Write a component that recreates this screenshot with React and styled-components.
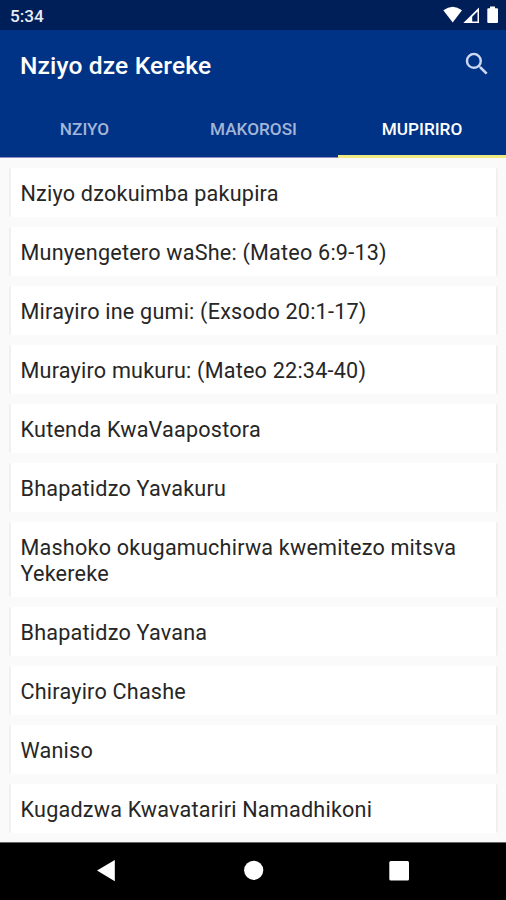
import React from 'react';
import styled, { createGlobalStyle } from 'styled-components';

const GlobalStyle = createGlobalStyle`
  * { box-sizing: border-box; }
  body { margin: 0; background: #fafafa; font-family: Roboto, sans-serif; }
`;

const Screen = styled.div`
  width: 506px;
  height: 900px;
  display: flex;
  flex-direction: column;
  overflow: hidden;
  background: #fafafa;
`;

const StatusBar = styled.div`
  flex: none;
  height: 30px;
  padding: 2px 7px 0 10px;
  display: flex;
  align-items: center;
  justify-content: space-between;
  background: #001f58;
  color: #e9edf5;
  font-size: 17.2px;
  font-weight: 500;
`;

const StatusIcons = styled.svg`
  display: block;
  width: 56px;
  height: 20px;
  margin-top: -2px;
`;

const Header = styled.header`
  flex: none;
  height: 128px;
  display: flex;
  flex-direction: column;
  background: #003385;
`;

const Toolbar = styled.div`
  height: 70px;
  padding: 0 16px 0 20px;
  display: flex;
  align-items: center;
  justify-content: space-between;
`;

const Title = styled.h1`
  margin: 2px 0 0;
  color: #fff;
  font-size: 24.6px;
  font-weight: 500;
  line-height: 30px;
  letter-spacing: 0.13px;
`;

const SearchIcon = styled.svg`
  display: block;
  width: 30px;
  height: 30px;
  margin: -2px -2px 0 0;
  fill: #ccd8f2;
`;

const Tabs = styled.nav`
  height: 58px;
  display: grid;
  grid-template-columns: 169px 169px 168px;
`;

const Tab = styled.div`
  height: 58px;
  padding-top: ${(p) => (p.$active ? '3px' : '1px')};
  display: flex;
  align-items: center;
  justify-content: center;
  color: ${(p) => (p.$active ? '#fff' : '#a3b5d8')};
  border-bottom: ${(p) => (p.$active ? '3px solid #eeea84' : '1px solid #8e8ec4')};
  font-size: 17.2px;
  font-weight: 500;
`;

const List = styled.main`
  flex: 1;
  min-height: 0;
  padding: 10px 8px 0 9px;
  display: flex;
  flex-direction: column;
  gap: 10px;
  overflow: hidden;
`;

const Card = styled.div`
  flex: none;
  padding: 13px 9px 10px 9.5px;
  background: #fff;
  border: solid #f0f0f0;
  border-width: 0 2px;
  border-radius: 2px;
  color: #262626;
  font-size: 21.6px;
  line-height: 26px;
  letter-spacing: 0.21px;
`;

const NavBar = styled.footer`
  flex: none;
  height: 58px;
  display: grid;
  grid-template-columns: 180px 147px 1fr;
  background: #000;
  border-top: 1px solid #666;
`;

const NavIcon = styled.svg`
  display: block;
  width: 24px;
  height: 24px;
  margin: 15px 0 0 ${(p) => p.$offset}px;
  fill: #fff;
`;

const tabs = ['NZIYO', 'MAKOROSI', 'MUPIRIRO'];

const entries = [
  'Nziyo dzokuimba pakupira',
  'Munyengetero waShe: (Mateo 6:9-13)',
  'Mirayiro ine gumi: (Exsodo 20:1-17)',
  'Murayiro mukuru: (Mateo 22:34-40)',
  'Kutenda KwaVaapostora',
  'Bhapatidzo Yavakuru',
  'Mashoko okugamuchirwa kwemitezo mitsva Yekereke',
  'Bhapatidzo Yavana',
  'Chirayiro Chashe',
  'Waniso',
  'Kugadzwa Kwavatariri Namadhikoni',
];

export default function App() {
  return (
    <Screen>
      <GlobalStyle />
      <StatusBar>
        <span>5:34</span>
        <StatusIcons viewBox="443 5 56 20" fill="#fff">
          <path d="M443.3 10.2Q452.8 3.2 462 10.2L452.7 22.6Z" />
          <path fillRule="evenodd" d="M479 7.5V23H463.3ZM477.5 11.5L472.2 16.8V21.5H477.5Z" />
          <path d="M490 6.5H495V8.2H497Q498 8.2 498 9.2V22Q498 23 497 23H488.3Q487.3 23 487.3 22V9.2Q487.3 8.2 488.3 8.2H490Z" />
        </StatusIcons>
      </StatusBar>
      <Header>
        <Toolbar>
          <Title>Nziyo dze Kereke</Title>
          <SearchIcon viewBox="0 0 24 24">
            <path d="M15.5 14h-.79l-.28-.27A6.47 6.47 0 0 0 16 9.5 6.5 6.5 0 1 0 9.5 16c1.61 0 3.09-.59 4.23-1.57l.27.28v.79l5 4.99L20.49 19l-4.99-5zm-6 0C7.01 14 5 11.99 5 9.5S7.01 5 9.5 5 14 7.01 14 9.5 11.99 14 9.5 14z" />
          </SearchIcon>
        </Toolbar>
        <Tabs>
          {tabs.map((t, i) => (
            <Tab key={t} $active={i === 2}>{t}</Tab>
          ))}
        </Tabs>
      </Header>
      <List>
        {entries.map((e) => (
          <Card key={e}>{e}</Card>
        ))}
      </List>
      <NavBar>
        <NavIcon viewBox="0 0 24 24" $offset={94}>
          <path d="M3 12.5L20.8 2V23.3Z" />
        </NavIcon>
        <NavIcon viewBox="0 0 24 24" $offset={62}>
          <circle cx="11.7" cy="12.3" r="9.6" />
        </NavIcon>
        <NavIcon viewBox="0 0 24 24" $offset={60}>
          <rect x="2.3" y="3" width="19.7" height="19.5" rx="1.5" />
        </NavIcon>
      </NavBar>
    </Screen>
  );
}
